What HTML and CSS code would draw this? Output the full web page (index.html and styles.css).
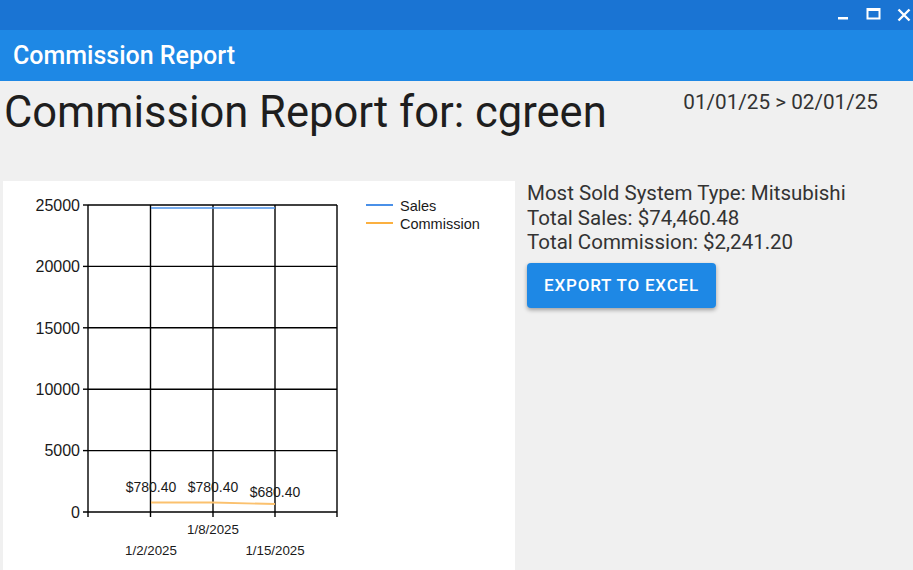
FILE: index.html
```html
<!DOCTYPE html>
<html>
<head>
<meta charset="utf-8">
<link rel="stylesheet" href="styles.css">
</head>
<body>
<div class="titlebar">
  <svg class="winctl" width="80" height="30" viewBox="833 0 80 30">
    <rect x="838" y="17" width="10" height="2.5" fill="#fff"/>
    <rect x="867.5" y="9" width="12" height="9.5" fill="none" stroke="#fff" stroke-width="2"/>
    <rect x="867" y="8" width="13" height="3" fill="#fff"/>
    <path d="M898.5 9.5 L909.5 20.5 M909.5 9.5 L898.5 20.5" stroke="#fff" stroke-width="2.4"/>
  </svg>
</div>
<div class="appbar">Commission Report</div>
<div class="heading">
  <h1 class="title">Commission Report for: cgreen</h1>
  <div class="range">01/01/25 &gt; 02/01/25</div>
</div>
<div class="content">
  <div class="chart-panel">
    <svg class="chart" width="512" height="389" viewBox="3 181 512 389">
      <g stroke="#000" stroke-width="1.4" fill="none">
        <line x1="88" y1="205" x2="337" y2="205"/>
        <line x1="88" y1="266.4" x2="337" y2="266.4"/>
        <line x1="88" y1="327.8" x2="337" y2="327.8"/>
        <line x1="88" y1="389.2" x2="337" y2="389.2"/>
        <line x1="88" y1="450.6" x2="337" y2="450.6"/>
        <line x1="83" y1="512" x2="337" y2="512"/>
        <line x1="83" y1="205" x2="88" y2="205"/>
        <line x1="83" y1="266.4" x2="88" y2="266.4"/>
        <line x1="83" y1="327.8" x2="88" y2="327.8"/>
        <line x1="83" y1="389.2" x2="88" y2="389.2"/>
        <line x1="83" y1="450.6" x2="88" y2="450.6"/>
        <line x1="88" y1="205" x2="88" y2="517"/>
        <line x1="150.5" y1="205" x2="150.5" y2="517"/>
        <line x1="213" y1="205" x2="213" y2="517"/>
        <line x1="275" y1="205" x2="275" y2="517"/>
        <line x1="337" y1="205" x2="337" y2="517"/>
      </g>
      <line x1="151" y1="208" x2="275" y2="208" stroke="#4a90e8" stroke-width="1.6"/>
      <polyline points="151,502.5 213,502.5 275,504" fill="none" stroke="#fbc16e" stroke-width="1.8"/>
      <g class="ylab" text-anchor="end">
        <text x="80" y="211">25000</text>
        <text x="80" y="272">20000</text>
        <text x="80" y="334">15000</text>
        <text x="80" y="395">10000</text>
        <text x="80" y="456">5000</text>
        <text x="80" y="518">0</text>
      </g>
      <g class="plab" text-anchor="middle">
        <text x="151" y="492">$780.40</text>
        <text x="213" y="492">$780.40</text>
        <text x="275" y="497">$680.40</text>
      </g>
      <g class="xlab" text-anchor="middle">
        <text x="213" y="534">1/8/2025</text>
        <text x="151" y="555">1/2/2025</text>
        <text x="275" y="555">1/15/2025</text>
      </g>
      <line x1="366" y1="205" x2="393" y2="205" stroke="#4a90e8" stroke-width="2"/>
      <line x1="366" y1="223" x2="393" y2="223" stroke="#fbb040" stroke-width="2"/>
      <g class="leg">
        <text x="400" y="211">Sales</text>
        <text x="400" y="229">Commission</text>
      </g>
    </svg>
  </div>
  <div class="info">
    <div class="line">Most Sold System Type: Mitsubishi</div>
    <div class="line">Total Sales: $74,460.48</div>
    <div class="line">Total Commission: $2,241.20</div>
    <button class="export">EXPORT TO EXCEL</button>
  </div>
</div>
</body>
</html>
```

FILE: styles.css
```css
html, body {
  margin: 0;
  padding: 0;
}
body {
  background: #f0f0f0;
  font-family: Roboto, "Noto Sans", sans-serif;
  color: #222;
  width: 913px;
  height: 570px;
  overflow: hidden;
}
.titlebar {
  height: 30px;
  background: #1a74d3;
  display: flex;
  justify-content: flex-end;
}
.winctl {
  display: block;
}
.appbar {
  height: 51px;
  background: #1e88e5;
  color: #fff;
  font-size: 25px;
  font-weight: 500;
  display: flex;
  align-items: center;
  padding-left: 13px;
  box-sizing: border-box;
  padding-bottom: 1px;
}
.heading {
  display: flex;
  justify-content: space-between;
  align-items: flex-start;
  height: 100px;
}
.title {
  margin: 0;
  padding: 7px 0 0 4px;
  font-size: 43.5px;
  font-weight: 400;
  line-height: 50px;
  color: #1e1e1e;
}
.range {
  padding: 9px 35px 0 0;
  font-size: 20.7px;
  line-height: 24px;
  color: #333;
}
.content {
  display: flex;
  align-items: flex-start;
  gap: 12px;
}
.chart-panel {
  margin-left: 3px;
  width: 512px;
  height: 389px;
  background: #fff;
}
.chart {
  display: block;
}
.chart text {
  font-family: "Liberation Sans", Arial, sans-serif;
  fill: #1a1a1a;
}
.ylab text { font-size: 16px; }
.plab text { font-size: 14px; }
.xlab text { font-size: 13.3px; }
.leg text { font-size: 14.5px; }
.info {
  display: flex;
  flex-direction: column;
  align-items: flex-start;
  padding-top: 0;
}
.line {
  font-size: 20.5px;
  line-height: 24.5px;
  color: #333;
}
.export {
  margin-top: 8px;
  width: 189px;
  height: 45px;
  border: none;
  border-radius: 4px;
  background: #1e88e5;
  color: #fff;
  font-family: Roboto, sans-serif;
  font-size: 17px;
  font-weight: 500;
  letter-spacing: 0.8px;
  box-shadow: 0 2px 4px rgba(0,0,0,0.35);
  padding: 0;
}
```
